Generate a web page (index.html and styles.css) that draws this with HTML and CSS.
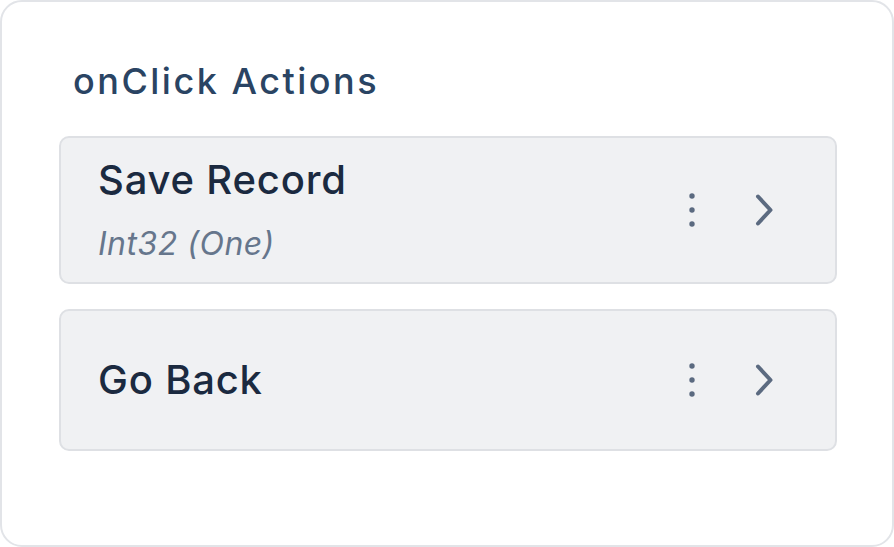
FILE: index.html
```html
<!DOCTYPE html>
<html lang="en">
<head>
<meta charset="utf-8">
<title>onClick Actions</title>
<link rel="stylesheet" href="styles.css">
</head>
<body>
<div class="card">
  <h2 class="title">onClick Actions</h2>
  <div class="list">
    <div class="row">
      <div class="text">
        <div class="name">Save Record</div>
        <div class="sub">Int32 (One)</div>
      </div>
      <div class="actions">
        <span class="btn"><svg width="8" height="36" viewBox="0 0 8 36"><circle cx="4" cy="4" r="2.7"/><circle cx="4" cy="18" r="2.7"/><circle cx="4" cy="32" r="2.7"/></svg></span>
        <span class="btn"><svg width="20" height="32" viewBox="0 0 20 32"><path d="M4 2.5 L16.5 16 L4 29.5"/></svg></span>
      </div>
    </div>
    <div class="row single">
      <div class="text">
        <div class="name">Go Back</div>
      </div>
      <div class="actions">
        <span class="btn"><svg width="8" height="36" viewBox="0 0 8 36"><circle cx="4" cy="4" r="2.7"/><circle cx="4" cy="18" r="2.7"/><circle cx="4" cy="32" r="2.7"/></svg></span>
        <span class="btn"><svg width="20" height="32" viewBox="0 0 20 32"><path d="M4 2.5 L16.5 16 L4 29.5"/></svg></span>
      </div>
    </div>
  </div>
</div>
</body>
</html>
```
FILE: styles.css
```css
* { box-sizing: border-box; }
html, body { margin: 0; padding: 0; background: #ffffff; }
body { font-family: Inter, "Noto Sans", sans-serif; }
.card {
  width: 894px;
  height: 547px;
  border: 2px solid #e2e4e8;
  border-radius: 22px;
  background: #ffffff;
  padding: 57px 55px 0 57px;
}
.title {
  margin: 0 0 33px 14px;
  font-size: 36px;
  line-height: 44px;
  font-weight: 500;
  letter-spacing: 2.5px;
  color: #2a4463;
}
.list { display: flex; flex-direction: column; gap: 25px; }
.row {
  display: flex;
  align-items: center;
  background: #f0f1f3;
  border: 2px solid #dee0e4;
  border-radius: 10px;
  padding: 18px 47px 18px 37px;
}
.row.single { padding-top: 45px; padding-bottom: 45px; }
.text { flex: 1; }
.name {
  font-size: 40px;
  line-height: 48px;
  font-weight: 500;
  letter-spacing: 0.8px;
  color: #1b2a40;
}
.sub {
  margin-top: 20px;
  font-size: 32px;
  line-height: 40px;
  font-style: italic;
  color: #66768c;
  letter-spacing: 0.5px;
}
.actions { display: flex; gap: 24px; align-items: center; }
.btn { width: 48px; height: 48px; display: flex; align-items: center; justify-content: center; }
.btn svg { fill: #5b6a80; stroke: #5b6a80; }
.btn svg circle { stroke: none; }
.btn svg path { fill: none; stroke-width: 4; stroke-linecap: round; stroke-linejoin: round; }
```
